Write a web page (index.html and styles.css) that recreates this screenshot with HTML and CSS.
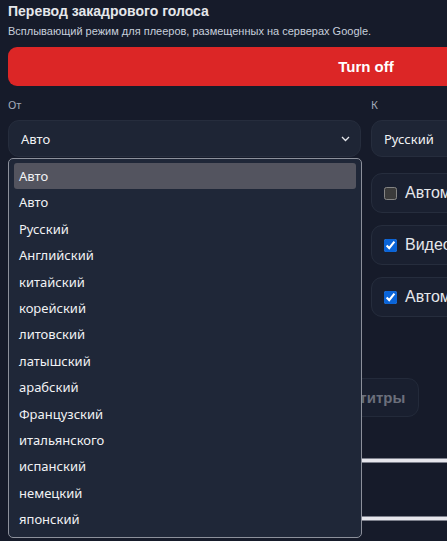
FILE: index.html
```html
<!DOCTYPE html>
<html>
<head>
    <title>Перевод закадрового голоса</title>
    <link rel="stylesheet" href="styles.css">
</head>
<body>
    <div class="panel">
        <h1>Перевод закадрового голоса</h1>
        <p class="hint">Всплывающий режим для плееров, размещенных на серверах Google.</p>

        <button class="toggle-btn">Turn off</button>

        <div class="columns">
            <div class="column">
                <label class="field-label">От</label>
                <div class="select open">
                    <span>Авто</span>
                    <svg class="chevron" width="9" height="6" viewBox="0 0 9 6"><path d="M1 1l3.5 3.5L8 1" fill="none" stroke="#e5e7eb" stroke-width="1.3"/></svg>
                </div>
                <div class="option-row"><input type="checkbox"> <span>Автоматически</span></div>
                <div class="option-row"><input type="checkbox" checked> <span>Громкость</span></div>
                <div class="option-row"><input type="checkbox" checked> <span>Голос</span></div>
                <div class="option-row"><input type="checkbox"> <span>Озвучка</span></div>

                <ul class="dropdown">
                    <li class="active">Авто</li>
                    <li>Авто</li>
                    <li>Русский</li>
                    <li>Английский</li>
                    <li>китайский</li>
                    <li>корейский</li>
                    <li>литовский</li>
                    <li>латышский</li>
                    <li>арабский</li>
                    <li>Французский</li>
                    <li>итальянского</li>
                    <li>испанский</li>
                    <li>немецкий</li>
                    <li>японский</li>
                </ul>
            </div>
            <div class="column">
                <label class="field-label">К</label>
                <div class="select">
                    <span>Русский</span>
                    <svg class="chevron" width="9" height="6" viewBox="0 0 9 6"><path d="M1 1l3.5 3.5L8 1" fill="none" stroke="#e5e7eb" stroke-width="1.3"/></svg>
                </div>
                <div class="option-row"><input type="checkbox"> <span>Автоматический перевод</span></div>
                <div class="option-row"><input type="checkbox" checked> <span>Видео громкость</span></div>
                <div class="option-row"><input type="checkbox" checked> <span>Автоматически включать</span></div>
            </div>
        </div>

        <div class="tabs">
            <button class="tab">Озвучка</button>
            <button class="tab">Субтитры</button>
        </div>

        <div class="track"></div>
        <div class="track"></div>
    </div>
</body>
</html>
```

FILE: styles.css
```css
html {
    overflow: hidden;
    background-color: #161b2a;
}

body {
    margin: 0;
    min-height: 100vh;
    background-color: #161b2a;
    color: #e5e7eb;
    font-family: 'Liberation Sans', Arial, sans-serif;
    color-scheme: dark;
}

.panel {
    width: 716px;
    padding: 3px 8px 30px;
}

.panel h1 {
    margin: 0;
    font-size: 14px;
    font-weight: 700;
    line-height: 17px;
    color: #e5e7eb;
}

.hint {
    margin: 4px 0 0;
    font-size: 11px;
    line-height: 14px;
    color: #c7cfdc;
}

.toggle-btn {
    display: block;
    width: 100%;
    height: 39px;
    margin-top: 9px;
    border: none;
    border-radius: 9px;
    background-color: #dc2626;
    color: #fff;
    font-family: 'Liberation Sans', Arial, sans-serif;
    font-size: 15px;
    font-weight: 700;
}

.columns {
    display: grid;
    grid-template-columns: 1fr 1fr;
    gap: 10px;
    margin-top: 12px;
}

.column {
    position: relative;
    display: flex;
    flex-direction: column;
}

.field-label {
    font-family: 'Noto Sans', sans-serif;
    font-size: 11px;
    line-height: 14px;
    color: #a3aab8;
    margin-bottom: 8px;
}

.select {
    display: flex;
    align-items: center;
    justify-content: space-between;
    height: 35px;
    padding: 0 10px 0 12px;
    border: 1px solid #262d3d;
    border-radius: 11px;
    background-color: #1e2535;
    font-family: 'Noto Sans', sans-serif;
    font-size: 13px;
    color: #f1f2f4;
}

.option-row {
    display: flex;
    align-items: center;
    gap: 8px;
    height: 38px;
    margin-top: 16px;
    padding: 0 12px;
    border: 1px solid #262d3d;
    border-radius: 11px;
    background-color: #1a2030;
    font-size: 16px;
    white-space: nowrap;
    overflow: hidden;
}

.option-row + .option-row {
    margin-top: 12px;
}

.option-row input {
    width: 13px;
    height: 13px;
    margin: 0;
    accent-color: #0a64d8;
}

/* open native list of the "from" select */
.dropdown {
    position: absolute;
    left: 0;
    top: 60px;
    width: 342px;
    margin: 0;
    padding: 4px 5px 5px;
    list-style: none;
    border: 1px solid #8c909b;
    border-radius: 5px;
    background-color: #1f2738;
    font-family: 'Noto Sans', sans-serif;
    font-size: 13px;
    color: #f1f2f4;
}

.dropdown li {
    height: 26.4px;
    line-height: 26px;
    padding: 0 5px;
    border-radius: 3px;
}

.dropdown li.active {
    background-color: #53545f;
}

.tabs {
    display: flex;
    gap: 10px;
    margin-top: 9px;
    padding-left: 210px;
}

.tab {
    height: 39px;
    padding: 0 13px;
    border: 1px solid #232a3a;
    border-radius: 11px;
    background-color: #191f2f;
    color: #6b6f7c;
    font-family: 'Liberation Sans', Arial, sans-serif;
    font-size: 15px;
    font-weight: 700;
}

.track {
    height: 3px;
    margin-top: 41px;
    border: 1px solid #7d808c;
    background-color: #e6e6ec;
}

.track + .track {
    margin-top: 53px;
}
```
